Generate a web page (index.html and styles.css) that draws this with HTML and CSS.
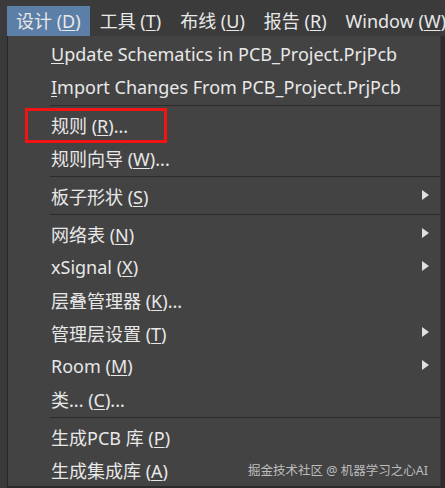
FILE: index.html
```html
<!DOCTYPE html>
<html>
<head>
<meta charset="utf-8">
<link rel="stylesheet" href="styles.css">
</head>
<body>
<div class="bar">
  <span class="top active">设计 (<u>D</u>)</span>
  <span class="top">工具 (<u>T</u>)</span>
  <span class="top">布线 (<u>U</u>)</span>
  <span class="top">报告 (<u>R</u>)</span>
  <span class="top">Window (<u>W</u>)</span>
</div>
<div class="stage">
  <div class="side"></div>
  <div class="menu">
    <div class="item"><span><u>U</u>pdate Schematics in PCB_Project.PrjPcb</span></div>
    <div class="item"><span><u>I</u>mport Changes From PCB_Project.PrjPcb</span></div>
    <div class="sep"></div>
    <div class="item"><span>规则 (<u>R</u>)...</span></div>
    <div class="item"><span>规则向导 (<u>W</u>)...</span></div>
    <div class="sep"></div>
    <div class="item sub"><span>板子形状 (<u>S</u>)</span></div>
    <div class="sep"></div>
    <div class="item sub"><span>网络表 (<u>N</u>)</span></div>
    <div class="item sub"><span>xSignal (<u>X</u>)</span></div>
    <div class="item"><span>层叠管理器 (<u>K</u>)...</span></div>
    <div class="item sub"><span>管理层设置 (<u>T</u>)</span></div>
    <div class="item sub"><span>Room (<u>M</u>)</span></div>
    <div class="item"><span>类... (<u>C</u>)...</span></div>
    <div class="sep"></div>
    <div class="item"><span>生成PCB 库 (<u>P</u>)</span></div>
    <div class="item"><span>生成集成库 (<u>A</u>)</span><span class="mark">掘金技术社区 @ 机器学习之心AI</span></div>
    <div class="redbox"></div>
  </div>
</div>
</body>
</html>
```
FILE: styles.css
```css
html, body {
  margin: 0;
  padding: 0;
}
body {
  width: 445px;
  height: 488px;
  overflow: hidden;
  background: #2c2c2c;
  font-family: "Noto Sans", "Noto Sans CJK SC", sans-serif;
  color: #e8e8e8;
  font-size: 18px;
}
u {
  text-decoration-thickness: 1px;
  text-underline-offset: 2px;
}
.bar {
  height: 36px;
  background: #3b3b3b;
  display: flex;
  align-items: flex-end;
  padding-left: 7px;
  box-sizing: border-box;
}
.top {
  height: 30px;
  line-height: 30px;
  padding: 0 9px 0 9px;
  margin-right: 1px;
  white-space: nowrap;
}
.top.active {
  background: #5b7fa6;
}
.stage {
  display: flex;
  height: 452px;
}
.side {
  width: 7px;
  background: #3a3a3a;
  border-right: 1px solid #262626;
}
.menu {
  position: relative;
  width: 433px;
  background: #434343;
  border-right: 1px solid #363636;
  border-bottom: 1px solid #2a2a2a;
  box-sizing: border-box;
  height: 451px;
  padding-top: 1px;
}
.item {
  height: 33px;
  display: flex;
  align-items: center;
  padding-left: 43px;
  padding-right: 12px;
  position: relative;
  white-space: nowrap;
}
.item.sub::after {
  content: "";
  position: absolute;
  right: 11px;
  top: 11px;
  border-left: 7px solid #e0e0e0;
  border-top: 5px solid transparent;
  border-bottom: 5px solid transparent;
}
.sep {
  height: 5px;
  display: flex;
  align-items: center;
  margin-left: 42px;
}
.sep::before {
  content: "";
  flex: 1;
  height: 1px;
  background: #2c2c2c;
}
.mark {
  margin-left: auto;
  font-size: 12.5px;
  color: #bdbdbd;
}
.redbox {
  position: absolute;
  left: 17px;
  top: 72px;
  width: 142px;
  height: 35px;
  border: 3px solid #f01414;
  box-sizing: border-box;
}
```
